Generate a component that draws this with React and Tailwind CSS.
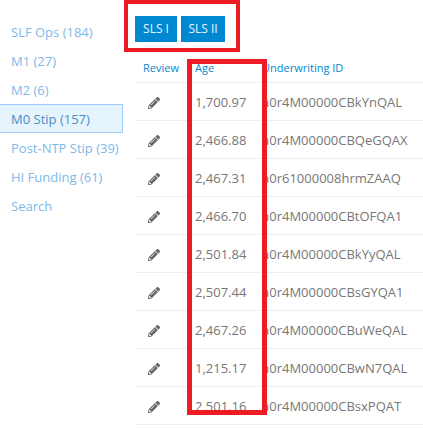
import React from 'react';
import { FaPencilAlt } from 'react-icons/fa';

const navItems = [
  { label: 'SLF Ops (184)' },
  { label: 'M1 (27)' },
  { label: 'M2 (6)' },
  { label: 'M0 Stip (157)', active: true },
  { label: 'Post-NTP Stip (39)' },
  { label: 'HI Funding (61)' },
  { label: 'Search' },
];

const rows = [
  ['1,700.97', 'a0r4M00000CBkYnQAL'],
  ['2,466.88', 'a0r4M00000CBQeGQAX'],
  ['2,467.31', 'a0r61000008hrmZAAQ'],
  ['2,466.70', 'a0r4M00000CBtOFQA1'],
  ['2,501.84', 'a0r4M00000CBkYyQAL'],
  ['2,507.44', 'a0r4M00000CBsGYQA1'],
  ['2,467.26', 'a0r4M00000CBuWeQAL'],
  ['1,215.17', 'a0r4M00000CBwN7QAL'],
  ['2,501.16', 'a0r4M00000CBsxPQAT'],
];

export default function App() {
  return (
    <div className="relative flex h-[428px] w-[423px] overflow-hidden bg-white font-['Open_Sans',sans-serif] text-[13px]">
      {/* Side nav */}
      <div className="w-[123px] shrink-0 pt-[17px]">
        {navItems.map((item) => (
          <div
            key={item.label}
            className={
              item.active
                ? 'flex h-[29px] items-center whitespace-nowrap border border-l-0 border-[#9ccafa] bg-[#e6f4fd] pl-[11px] pt-[2px] text-[#4a8fc6]'
                : 'flex h-[29px] items-center whitespace-nowrap pl-[11px] pt-[2px] text-[#7db9e8]'
            }
          >
            {item.label}
          </div>
        ))}
      </div>

      {/* Main */}
      <div className="ml-3 w-[288px] shrink-0">
        <div className="flex h-[55px] items-start gap-1 pt-4">
          <button className="flex h-[26px] w-[42px] items-center justify-center bg-[#0088d1] text-[12px] text-[#e8f6ff]">SLS I</button>
          <button className="flex h-[26px] w-[44px] items-center justify-center bg-[#0088d1] text-[12px] text-[#e8f6ff]">SLS II</button>
        </div>

        <div className="flex h-[28px] items-center border-b border-[#eeeeee] text-[11px] font-medium text-[#0088d1]">
          <div className="w-[60px] pl-2">Review</div>
          <div className="w-[67px]">Age</div>
          <div>Underwriting ID</div>
        </div>

        {rows.map(([age, id]) => (
          <div key={id} className="flex h-[38px] items-center border-b border-[#eeeeee] pt-[2px] text-[#777777]">
            <div className="w-[60px] pl-[13px]">
              <FaPencilAlt className="h-3 w-3 text-[#666666]" />
            </div>
            <div className="w-[67px]">{age}</div>
            <div className="whitespace-nowrap">{id}</div>
          </div>
        ))}
      </div>

      {/* Red annotation boxes */}
      <div className="absolute left-[124px] top-0 h-[52px] w-[116px] border-4 border-[#ed1c24]" />
      <div className="absolute left-[187px] top-[59px] h-[356px] w-[80px] border-[5px] border-[#ed1c24]" />
    </div>
  );
}
